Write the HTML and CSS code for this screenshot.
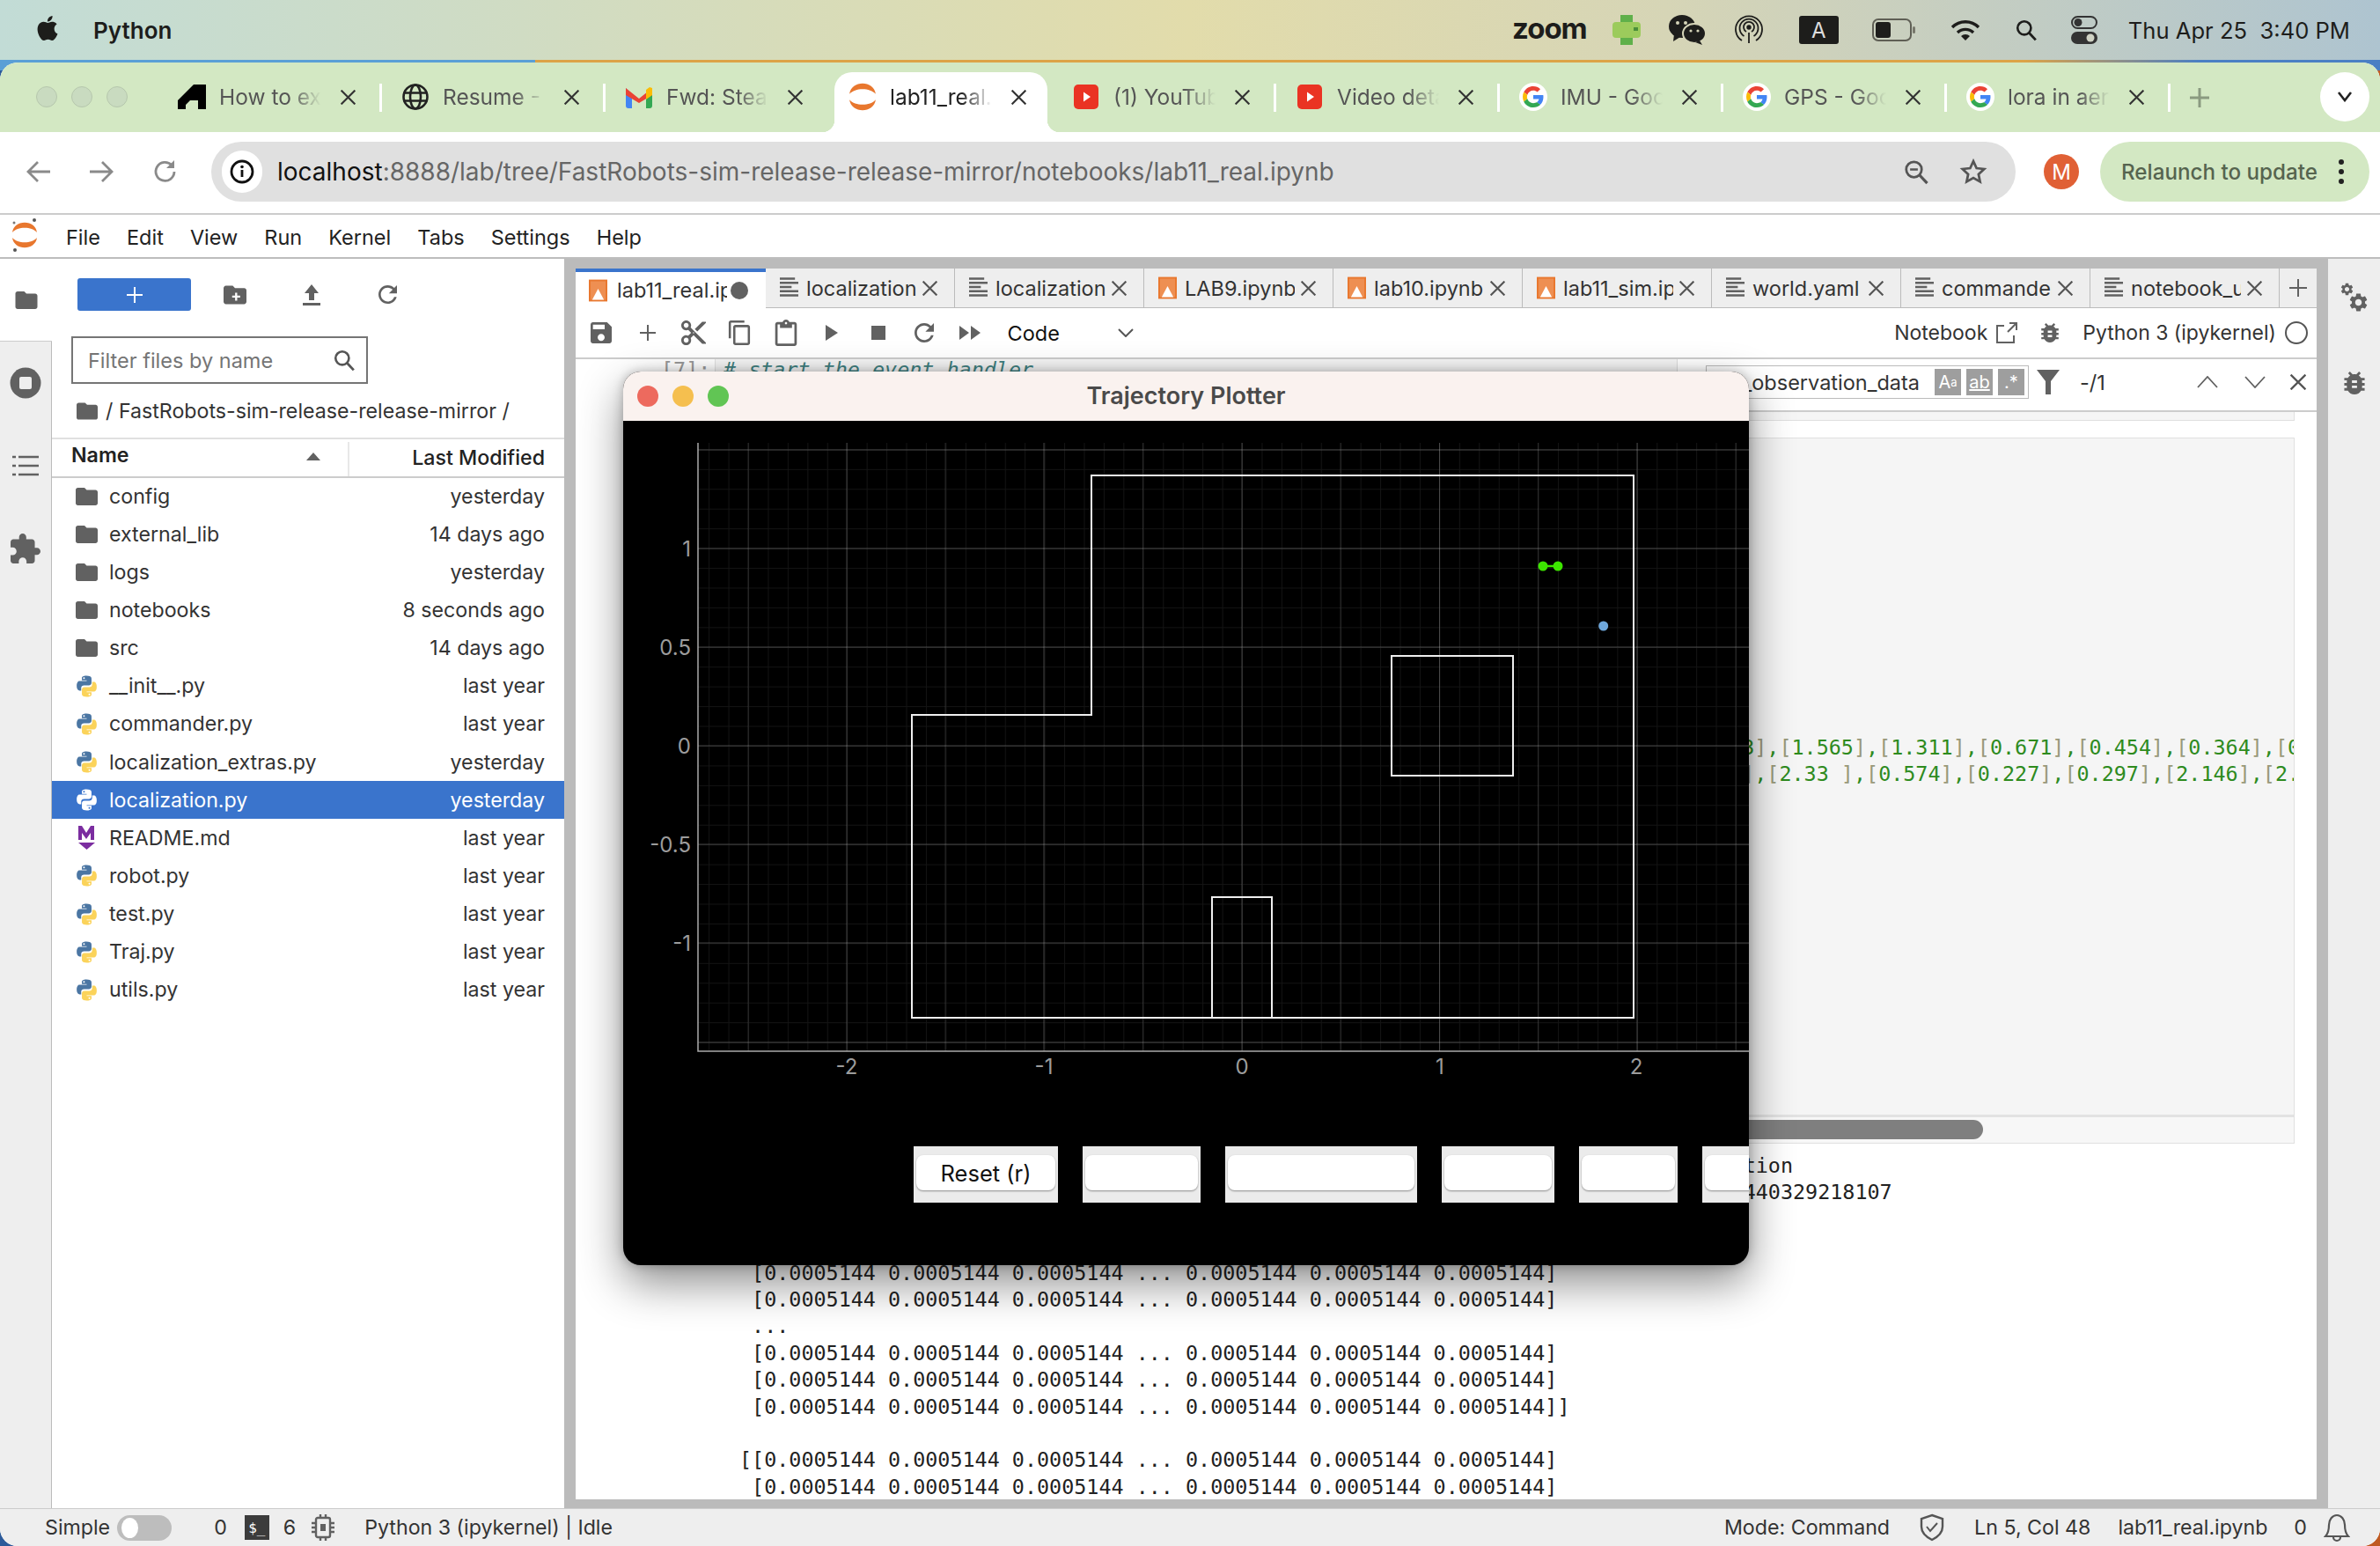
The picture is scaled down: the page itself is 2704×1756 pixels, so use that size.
FILE: index.html
```html
<!DOCTYPE html>
<html lang="en">
<head>
<meta charset="utf-8">
<title>lab11_real</title>
<link rel="stylesheet" href="styles.css">
</head>
<body>
<svg class="defs" width="0" height="0">
  <symbol id="i-folder" viewBox="2 4 20 16"><path d="M10 4H4c-1.1 0-2 .9-2 2v12c0 1.1.9 2 2 2h16c1.1 0 2-.9 2-2V8c0-1.1-.9-2-2-2h-8l-2-2z"/></symbol>
  <symbol id="i-py" viewBox="1.5 1 21 22">
    <path class="py-a" d="M11.9 1.5c-5 0-4.7 2.2-4.7 2.2v2.3h4.8v.7H5.3S2 6.3 2 11.4s2.8 4.9 2.8 4.9h1.7v-2.4s-.1-2.8 2.8-2.8h4.8s2.7 0 2.7-2.6V4.3s.4-2.8-4.9-2.8zM9.3 3a.9.9 0 1 1 0 1.8.9.9 0 0 1 0-1.8z"/>
    <path class="py-b" transform="rotate(180 12 12)" d="M11.9 1.5c-5 0-4.7 2.2-4.7 2.2v2.3h4.8v.7H5.3S2 6.3 2 11.4s2.8 4.9 2.8 4.9h1.7v-2.4s-.1-2.8 2.8-2.8h4.8s2.7 0 2.7-2.6V4.3s.4-2.8-4.9-2.8zM9.3 3a.9.9 0 1 1 0 1.8.9.9 0 0 1 0-1.8z"/>
  </symbol>
  <symbol id="i-x" viewBox="5 5 14 14"><path d="M5.500 5.500l13 13M18.500 5.500l-13 13" fill="none" stroke="currentColor" stroke-width="1.800"/></symbol>
  <symbol id="i-nb" viewBox="0 0 22 26"><rect width="22" height="26" fill="#e8772e"/><rect x="2" y="2" width="18" height="22" fill="#ee8f52"/><path d="M4 24L11 11l7 13z" fill="#fff"/></symbol>
  <symbol id="i-doc" viewBox="0 0 22 26"><path d="M0 2h18M0 7h22M0 12h14M0 17h22M0 22h22" fill="none" stroke="#616161" stroke-width="2.6"/></symbol>
  <symbol id="i-g" viewBox="-8 -8 64 64">
    <circle cx="24" cy="24" r="32" fill="#fff"/>
    <path fill="#EA4335" d="M24 9.5c3.54 0 6.71 1.22 9.21 3.6l6.85-6.85C35.9 2.38 30.47 0 24 0 14.62 0 6.51 5.38 2.56 13.22l7.98 6.19C12.43 13.72 17.74 9.5 24 9.5z"/>
    <path fill="#4285F4" d="M46.98 24.55c0-1.57-.15-3.09-.38-4.55H24v9.02h12.94c-.58 2.96-2.26 5.48-4.78 7.18l7.73 6c4.51-4.18 7.09-10.36 7.09-17.65z"/>
    <path fill="#FBBC05" d="M10.53 28.59c-.48-1.45-.76-2.99-.76-4.59s.27-3.14.76-4.59l-7.98-6.19C.92 16.46 0 20.12 0 24c0 3.88.92 7.54 2.56 10.78l7.97-6.19z"/>
    <path fill="#34A853" d="M24 48c6.48 0 11.93-2.13 16.06-5.81l-7.73-6c-2.15 1.45-4.92 2.3-8.33 2.3-6.26 0-11.57-4.22-13.47-9.91l-7.98 6.19C6.51 42.62 14.62 48 24 48z"/>
  </symbol>
  <symbol id="i-yt" viewBox="0 0 28 28"><rect width="28" height="28" rx="5" fill="#ea3323"/><path d="M11 8.5l8 5.5-8 5.5z" fill="#fff"/></symbol>
  <symbol id="i-jup" viewBox="0 0 30 30">
    <path d="M1 12C3 -3 27 -3 29 12 23 5 7 5 1 12z" fill="#e8772e"/>
    <path d="M1 18C3 33 27 33 29 18 23 25 7 25 1 18z" fill="#e8772e"/>
  </symbol>
  <symbol id="i-gear" viewBox="0 0 24 24"><path d="M19.14 12.94c.04-.3.06-.61.06-.94 0-.32-.02-.64-.07-.94l2.03-1.58c.18-.14.23-.41.12-.61l-1.92-3.32c-.12-.22-.37-.29-.59-.22l-2.39.96c-.5-.38-1.03-.7-1.62-.94l-.36-2.54c-.04-.24-.24-.41-.48-.41h-3.84c-.24 0-.43.17-.47.41l-.36 2.54c-.59.24-1.13.57-1.62.94l-2.39-.96c-.22-.08-.47 0-.59.22L2.74 8.87c-.12.21-.08.47.12.61l2.03 1.58c-.05.3-.07.62-.07.94s.02.64.07.94l-2.03 1.58c-.18.14-.23.41-.12.61l1.92 3.32c.12.22.37.29.59.22l2.39-.96c.5.38 1.03.7 1.62.94l.36 2.54c.05.24.24.41.48.41h3.84c.24 0 .44-.17.47-.41l.36-2.54c.59-.24 1.13-.56 1.62-.94l2.39.96c.22.08.47 0 .59-.22l1.92-3.32c.12-.22.07-.47-.12-.61l-2.01-1.58zM12 15.6c-1.98 0-3.6-1.62-3.6-3.6s1.62-3.6 3.6-3.6 3.6 1.62 3.6 3.6-1.62 3.6-3.6 3.6z"/></symbol>
  <symbol id="i-bug" viewBox="3 3 18 18"><path d="M20 8h-2.81c-.45-.78-1.07-1.45-1.82-1.96L17 4.41 15.59 3l-2.17 2.17C12.96 5.06 12.49 5 12 5c-.49 0-.96.06-1.41.17L8.41 3 7 4.41l1.62 1.63C7.88 6.55 7.26 7.22 6.81 8H4v2h2.09c-.05.33-.09.66-.09 1v1H4v2h2v1c0 .34.04.67.09 1H4v2h2.81c1.04 1.79 2.97 3 5.19 3s4.15-1.21 5.19-3H20v-2h-2.09c.05-.33.09-.66.09-1v-1h2v-2h-2v-1c0-.34-.04-.67-.09-1H20V8zm-6 8h-4v-2h4v2zm0-4h-4v-2h4v2z"/></symbol>
  <symbol id="i-search" viewBox="0 0 24 24"><circle cx="10" cy="10" r="7" fill="none" stroke="currentColor" stroke-width="2.4"/><path d="M15 15l7 7.5" stroke="currentColor" stroke-width="2.6" fill="none"/></symbol>
</svg>

<header class="menubar">
  <svg class="m-apple" width="28" height="32" viewBox="0 0 24 24"><path d="M12.152 6.896c-.948 0-2.415-1.078-3.96-1.04-2.04.027-3.91 1.183-4.961 3.014-2.117 3.675-.546 9.103 1.519 12.09 1.013 1.454 2.208 3.09 3.792 3.039 1.52-.065 2.09-.987 3.935-.987 1.831 0 2.35.987 3.96.948 1.637-.026 2.676-1.48 3.676-2.948 1.156-1.688 1.636-3.325 1.662-3.415-.039-.013-3.182-1.221-3.22-4.857-.026-3.04 2.48-4.494 2.597-4.559-1.429-2.09-3.623-2.324-4.39-2.376-2-.156-3.675 1.09-4.61 1.09zM15.53 3.83c.843-1.012 1.4-2.427 1.245-3.83-1.207.052-2.662.805-3.532 1.818-.78.896-1.454 2.338-1.273 3.714 1.338.104 2.715-.688 3.559-1.701"/></svg>
  <span class="m-app">Python</span>
  <span class="m-zoom">zoom</span>
  <svg class="m-i m-watch" width="32" height="34" viewBox="0 0 32 34"><rect x="9" y="0" width="14" height="34" fill="#5fb04a"/><rect x="0" y="8" width="32" height="18" rx="4" fill="#9ccb5c"/><rect x="24" y="14" width="5" height="4" fill="#4b8e3a"/></svg>
  <svg class="m-i m-wechat" width="42" height="34" viewBox="0 0 42 34"><ellipse cx="15" cy="13" rx="15" ry="13" fill="#1d1d1b"/><path d="M6 22l-1 8 8-5z" fill="#1d1d1b"/><ellipse cx="29" cy="21" rx="13" ry="11" fill="#1d1d1b" stroke="#d5d4b8" stroke-width="2"/><path d="M35 29l3 5-8-3z" fill="#1d1d1b"/><circle cx="10" cy="9" r="2" fill="#d5d4b8"/><circle cx="19" cy="9" r="2" fill="#d5d4b8"/><circle cx="25" cy="18" r="1.6" fill="#d5d4b8"/><circle cx="33" cy="18" r="1.6" fill="#d5d4b8"/></svg>
  <svg class="m-i m-air" width="32" height="34" viewBox="0 0 32 34" fill="none" stroke="#1d1d1b" stroke-width="1.8"><path d="M8 29a15 15 0 1 1 16 0"/><path d="M10.5 24a10.5 10.5 0 1 1 11 0"/><path d="M13 19a6 6 0 1 1 6 0"/><circle cx="16" cy="14" r="1.8" fill="#1d1d1b"/><path d="M16 20v12"/></svg>
  <span class="m-a">A</span>
  <svg class="m-i m-batt" width="50" height="26" viewBox="0 0 50 26"><rect x="1" y="1" width="43" height="24" rx="6" fill="none" stroke="#5f5f55" stroke-width="2"/><rect x="4" y="4" width="17" height="18" rx="3" fill="#1d1d1b"/><rect x="46" y="9" width="3" height="8" rx="1.5" fill="#77776b"/></svg>
  <svg class="m-i m-wifi" width="34" height="26" viewBox="0 0 34 26" fill="none" stroke="#1d1d1b" stroke-width="3.4"><path d="M2 10a21 21 0 0 1 30 0"/><path d="M8 16a13 13 0 0 1 18 0"/><path d="M17 25l-5-5a7 7 0 0 1 10 0z" fill="#1d1d1b" stroke="none"/></svg>
  <svg class="m-i m-srch" width="26" height="28" viewBox="0 0 24 24" color="#1d1d1b"><use href="#i-search"/></svg>
  <svg class="m-i m-ctl" width="30" height="32" viewBox="0 0 30 32"><rect x="1" y="1" width="28" height="13" rx="6.5" fill="none" stroke="#333" stroke-width="2"/><circle cx="8" cy="7.5" r="4.5" fill="#333"/><rect y="18" width="30" height="14" rx="7" fill="#333"/><circle cx="22" cy="25" r="4.5" fill="#cfd2c4"/></svg>
  <span class="m-clock">Thu Apr 25&nbsp;&nbsp;3:40 PM</span>
</header>

<div class="browser">
  <div class="tabstrip">
    <div class="lights"><i></i><i></i><i></i></div>
    <div class="ctab sep"><svg class="fav" width="32" height="28" viewBox="0 0 32 28"><path d="M0 28V18L18 0h14v28h-9V18h-9l-5 5v5z"/></svg><span class="ctab-t">How to extract</span><svg class="ctab-x" width="17" height="17"><use href="#i-x"/></svg></div>
    <div class="ctab sep"><svg class="fav" width="30" height="30" viewBox="0 0 30 30" fill="none" stroke="#222" stroke-width="2.6"><circle cx="15" cy="15" r="13.5"/><ellipse cx="15" cy="15" rx="6" ry="13.5"/><path d="M1.500 10.500h27M1.500 19.500h27"/></svg><span class="ctab-t">Resume - Ov</span><svg class="ctab-x" width="17" height="17"><use href="#i-x"/></svg></div>
    <div class="ctab"><svg class="fav" width="30" height="26" viewBox="0 0 30 26"><path d="M0 3v20a3 3 0 0 0 3 3h4V11z" fill="#4285f4"/><path d="M30 3v20a3 3 0 0 1-3 3h-4V11z" fill="#34a853"/><path d="M0 3l15 12L30 3v8L15 20 0 11z" fill="#ea4335"/><path d="M23 5l4-3 3 1v8l-7 5z" fill="#fbbc04"/></svg><span class="ctab-t">Fwd: Stead</span><svg class="ctab-x" width="17" height="17"><use href="#i-x"/></svg></div>
    <div class="ctab active"><svg class="fav" width="32" height="32"><use href="#i-jup"/></svg><span class="ctab-t">lab11_real.ipynb</span><svg class="ctab-x" width="17" height="17"><use href="#i-x"/></svg></div>
    <div class="ctab sep"><svg class="fav" width="28" height="28"><use href="#i-yt"/></svg><span class="ctab-t">(1) YouTube</span><svg class="ctab-x" width="17" height="17"><use href="#i-x"/></svg></div>
    <div class="ctab sep"><svg class="fav" width="28" height="28"><use href="#i-yt"/></svg><span class="ctab-t">Video details</span><svg class="ctab-x" width="17" height="17"><use href="#i-x"/></svg></div>
    <div class="ctab sep"><svg class="fav" width="32" height="32"><use href="#i-g"/></svg><span class="ctab-t">IMU - Google</span><svg class="ctab-x" width="17" height="17"><use href="#i-x"/></svg></div>
    <div class="ctab sep"><svg class="fav" width="32" height="32"><use href="#i-g"/></svg><span class="ctab-t">GPS - Google</span><svg class="ctab-x" width="17" height="17"><use href="#i-x"/></svg></div>
    <div class="ctab sep"><svg class="fav" width="32" height="32"><use href="#i-g"/></svg><span class="ctab-t">lora in aerial</span><svg class="ctab-x" width="17" height="17"><use href="#i-x"/></svg></div>
    <svg class="ctab-plus" width="22" height="22" viewBox="0 0 22 22"><path d="M11 0v22M0 11h22" stroke="#8a9a80" stroke-width="3"/></svg>
    <div class="tabmenu"><svg width="18" height="12" viewBox="0 0 18 12"><path d="M2 1l7 9 7-9" fill="none" stroke="#222" stroke-width="2.6"/></svg></div>
  </div>

  <div class="addr">
    <svg class="nav nav1" width="28" height="26" viewBox="0 0 28 26"><path d="M27 13H3M13 2L2 13l11 11" fill="none" stroke="#8a8a8a" stroke-width="2.8"/></svg>
    <svg class="nav nav2" width="28" height="26" viewBox="0 0 28 26"><path d="M1 13h24M15 2l11 11-11 11" fill="none" stroke="#8a8a8a" stroke-width="2.8"/></svg>
    <svg class="nav nav3" width="28" height="28" viewBox="0 0 28 28"><path d="M24 14a10.500 10.500 0 1 1-3-7.500" fill="none" stroke="#8a8a8a" stroke-width="2.8"/><path d="M24 1v9h-9z" fill="#8a8a8a"/></svg>
    <div class="omni">
      <span class="omni-i"><svg width="28" height="28" viewBox="0 0 28 28"><circle cx="14" cy="14" r="12" fill="none" stroke="#111" stroke-width="2.800"/><path d="M14 12v8" stroke="#111" stroke-width="2.800"/><circle cx="14" cy="8.500" r="1.800" fill="#111"/></svg></span>
      <span class="omni-t"><b>localhost</b>:8888/lab/tree/FastRobots-sim-release-release-mirror/notebooks/lab11_real.ipynb</span>
      <svg class="omni-z" width="30" height="30" viewBox="0 0 24 24" color="#555"><circle cx="10" cy="10" r="7" fill="none" stroke="currentColor" stroke-width="2.200"/><path d="M15 15l7 7.500" stroke="currentColor" stroke-width="2.600"/><path d="M6.500 10h7" stroke="currentColor" stroke-width="2"/></svg>
      <svg class="omni-s" width="32" height="30" viewBox="0 0 24 24"><path d="M12 2.500l2.900 6.300 6.900.8-5.100 4.700 1.400 6.800-6.100-3.400-6.100 3.400 1.400-6.800L2.200 9.600l6.900-.8z" fill="none" stroke="#555" stroke-width="2.200"/></svg>
    </div>
    <span class="avatar">M</span>
    <div class="relaunch"><span>Relaunch to update</span><svg width="8" height="30" viewBox="0 0 8 30"><circle cx="4" cy="4" r="3" fill="#222"/><circle cx="4" cy="15" r="3" fill="#222"/><circle cx="4" cy="26" r="3" fill="#222"/></svg></div>
  </div>

  <div class="jlab">
    <div class="jmenu">
      <svg class="j-logo" width="30" height="38" viewBox="0 0 30 38"><use href="#i-jup" x="0" y="4" width="30" height="30"/><circle cx="26" cy="2" r="2" fill="#555"/><circle cx="3" cy="5" r="1.500" fill="#777"/><circle cx="4" cy="36" r="2" fill="#555"/></svg>
      <span>File</span><span>Edit</span><span>View</span><span>Run</span><span>Kernel</span><span>Tabs</span><span>Settings</span><span>Help</span>
    </div>
    <div class="jbody">
      <nav class="rail">
        <div class="rail-on"><svg width="30" height="30" viewBox="0 0 24 24" fill="#616161"><path d="M10 4H4c-1.100 0-2 .9-2 2v12c0 1.100.9 2 2 2h16c1.100 0 2-.9 2-2V8c0-1.100-.9-2-2-2h-8l-2-2z"/></svg></div>
        <div class="rail-b"><svg width="36" height="36" viewBox="0 0 36 36"><circle cx="18" cy="18" r="17.500" fill="#616161"/><rect x="11" y="11" width="14" height="14" rx="2" fill="#eee"/></svg></div>
        <div class="rail-b"><svg width="30" height="24" viewBox="0 0 30 24" fill="none" stroke="#616161" stroke-width="2.600"><path d="M7 2h23M7 12h23M7 22h23M0 2h4M0 12h4M0 22h4"/></svg></div>
        <div class="rail-b"><svg width="34" height="34" viewBox="2 1 21 21" fill="#616161"><path d="M20.500 11H19V7c0-1.100-.9-2-2-2h-4V3.500C13 2.120 11.880 1 10.500 1S8 2.120 8 3.500V5H4c-1.100 0-1.990.9-1.990 2v3.800H3.500c1.490 0 2.700 1.210 2.700 2.700s-1.210 2.700-2.700 2.700H2V20c0 1.100.9 2 2 2h3.800v-1.500c0-1.490 1.210-2.700 2.700-2.700 1.490 0 2.700 1.210 2.700 2.700V22H17c1.100 0 2-.9 2-2v-4h1.500c1.380 0 2.500-1.120 2.500-2.500S21.880 11 20.500 11z"/></svg></div>
      </nav>

      <aside class="files">
        <div class="f-tools">
          <button class="f-new"><svg width="18" height="18" viewBox="0 0 18 18"><path d="M9 0v18M0 9h18" stroke="#fff" stroke-width="2"/></svg></button>
          <svg class="f-t1" width="26" height="24" viewBox="2 4 20 16" fill="#616161"><path d="M10 4H4c-1.100 0-2 .9-2 2v12c0 1.100.9 2 2 2h16c1.100 0 2-.9 2-2V8c0-1.100-.9-2-2-2h-8l-2-2z"/><path d="M13 10v7M9.500 13.500h7" stroke="#fff" stroke-width="1.800"/></svg>
          <svg class="f-t2" width="20" height="24" viewBox="0 0 20 24" fill="#616161"><path d="M10 0l8 10h-5v8H7v-8H2zM0 21h20v3H0z"/></svg>
          <svg class="f-t3" width="21" height="21" viewBox="4 4 16 16" fill="#616161"><path d="M17.650 6.350C16.200 4.900 14.210 4 12 4c-4.420 0-7.990 3.580-7.990 8s3.570 8 7.990 8c3.730 0 6.840-2.550 7.730-6h-2.080c-.82 2.330-3.040 4-5.650 4-3.310 0-6-2.690-6-6s2.690-6 6-6c1.660 0 3.140.69 4.220 1.780L13 11h7V4l-2.350 2.350z"/></svg>
        </div>
        <div class="f-filter"><span>Filter files by name</span><svg width="26" height="26" viewBox="0 0 24 24" color="#555"><use href="#i-search"/></svg></div>
        <div class="f-crumb"><svg width="24" height="20" fill="#616161"><use href="#i-folder"/></svg><span>/ FastRobots-sim-release-release-mirror /</span></div>
        <div class="f-head"><span class="f-name">Name</span><svg class="f-sort" width="16" height="9" viewBox="0 0 16 9"><path d="M8 0l8 9H0z" fill="#616161"/></svg><span class="f-mod">Last Modified</span></div>
        <div class="f-list">
          <div class="f-row"><svg class="f-ic" width="25" height="20" fill="#616161"><use href="#i-folder"/></svg><span class="f-n">config</span><span class="f-d">yesterday</span></div>
          <div class="f-row"><svg class="f-ic" width="25" height="20" fill="#616161"><use href="#i-folder"/></svg><span class="f-n">external_lib</span><span class="f-d">14 days ago</span></div>
          <div class="f-row"><svg class="f-ic" width="25" height="20" fill="#616161"><use href="#i-folder"/></svg><span class="f-n">logs</span><span class="f-d">yesterday</span></div>
          <div class="f-row"><svg class="f-ic" width="25" height="20" fill="#616161"><use href="#i-folder"/></svg><span class="f-n">notebooks</span><span class="f-d">8 seconds ago</span></div>
          <div class="f-row"><svg class="f-ic" width="25" height="20" fill="#616161"><use href="#i-folder"/></svg><span class="f-n">src</span><span class="f-d">14 days ago</span></div>
          <div class="f-row"><svg class="f-ic" width="25" height="25"><use href="#i-py"/></svg><span class="f-n">__init__.py</span><span class="f-d">last year</span></div>
          <div class="f-row"><svg class="f-ic" width="25" height="25"><use href="#i-py"/></svg><span class="f-n">commander.py</span><span class="f-d">last year</span></div>
          <div class="f-row"><svg class="f-ic" width="25" height="25"><use href="#i-py"/></svg><span class="f-n">localization_extras.py</span><span class="f-d">yesterday</span></div>
          <div class="f-row sel"><svg class="f-ic" width="25" height="25"><use href="#i-py"/></svg><span class="f-n">localization.py</span><span class="f-d">yesterday</span></div>
          <div class="f-row"><svg class="f-ic" width="25" height="27" viewBox="0 0 25 27"><path d="M3 16V0h4l5 8 5-8h4v16h-4V8l-5 7-5-7v8z" fill="#7b2da0"/><path d="M3 19h19l-9.500 8z" fill="#7b2da0"/></svg><span class="f-n">README.md</span><span class="f-d">last year</span></div>
          <div class="f-row"><svg class="f-ic" width="25" height="25"><use href="#i-py"/></svg><span class="f-n">robot.py</span><span class="f-d">last year</span></div>
          <div class="f-row"><svg class="f-ic" width="25" height="25"><use href="#i-py"/></svg><span class="f-n">test.py</span><span class="f-d">last year</span></div>
          <div class="f-row"><svg class="f-ic" width="25" height="25"><use href="#i-py"/></svg><span class="f-n">Traj.py</span><span class="f-d">last year</span></div>
          <div class="f-row"><svg class="f-ic" width="25" height="25"><use href="#i-py"/></svg><span class="f-n">utils.py</span><span class="f-d">last year</span></div>
        </div>
      </aside>

      <main class="main">
        <div class="d-tabs">
          <div class="d-tab on"><svg width="21" height="26"><use href="#i-nb"/></svg><span class="d-t">lab11_real.ipynb</span><span class="d-dot"></span></div>
          <div class="d-tab"><svg width="21" height="26"><use href="#i-doc"/></svg><span class="d-t">localization_extras.py</span><svg class="d-x" width="17" height="17"><use href="#i-x"/></svg></div>
          <div class="d-tab"><svg width="21" height="26"><use href="#i-doc"/></svg><span class="d-t">localization.py</span><svg class="d-x" width="17" height="17"><use href="#i-x"/></svg></div>
          <div class="d-tab"><svg width="21" height="26"><use href="#i-nb"/></svg><span class="d-t">LAB9.ipynb</span><svg class="d-x" width="17" height="17"><use href="#i-x"/></svg></div>
          <div class="d-tab"><svg width="21" height="26"><use href="#i-nb"/></svg><span class="d-t">lab10.ipynb</span><svg class="d-x" width="17" height="17"><use href="#i-x"/></svg></div>
          <div class="d-tab"><svg width="21" height="26"><use href="#i-nb"/></svg><span class="d-t">lab11_sim.ipynb</span><svg class="d-x" width="17" height="17"><use href="#i-x"/></svg></div>
          <div class="d-tab"><svg width="21" height="26"><use href="#i-doc"/></svg><span class="d-t">world.yaml</span><svg class="d-x" width="17" height="17"><use href="#i-x"/></svg></div>
          <div class="d-tab"><svg width="21" height="26"><use href="#i-doc"/></svg><span class="d-t">commander.py</span><svg class="d-x" width="17" height="17"><use href="#i-x"/></svg></div>
          <div class="d-tab"><svg width="21" height="26"><use href="#i-doc"/></svg><span class="d-t">notebook_utils.py</span><svg class="d-x" width="17" height="17"><use href="#i-x"/></svg></div>
          <svg class="d-plus" width="20" height="20" viewBox="0 0 20 20"><path d="M10 0v20M0 10h20" stroke="#616161" stroke-width="2"/></svg>
        </div>

        <div class="nb-tools">
          <span class="t-b"><svg width="24" height="24" viewBox="3 3 18 18" fill="#616161"><path d="M17 3H5c-1.110 0-2 .9-2 2v14c0 1.100.89 2 2 2h14c1.100 0 2-.9 2-2V7l-4-4zm-5 16c-1.660 0-3-1.340-3-3s1.340-3 3-3 3 1.340 3 3-1.340 3-3 3zm3-10H5V5h10v4z"/></svg></span>
          <span class="t-b"><svg width="18" height="18" viewBox="0 0 18 18"><path d="M9 0v18M0 9h18" stroke="#616161" stroke-width="2"/></svg></span>
          <span class="t-b"><svg width="28" height="28" viewBox="2 2 20 20" fill="#616161"><path d="M9.640 7.640c.23-.5.36-1.050.36-1.640 0-2.210-1.790-4-4-4S2 3.790 2 6s1.790 4 4 4c.59 0 1.140-.13 1.640-.36L10 12l-2.360 2.360C7.140 14.130 6.590 14 6 14c-2.210 0-4 1.790-4 4s1.790 4 4 4 4-1.790 4-4c0-.59-.13-1.140-.36-1.640L12 14l7 7h3v-1L9.640 7.640zM6 8c-1.100 0-2-.89-2-2s.9-2 2-2 2 .89 2 2-.9 2-2 2zm0 12c-1.100 0-2-.89-2-2s.9-2 2-2 2 .89 2 2-.9 2-2 2zm6-7.500c-.28 0-.5-.22-.5-.5s.22-.5.5-.5.5.22.5.5-.22.5-.5.5zM19 3l-6 6 2 2 7-7V3z"/></svg></span>
          <span class="t-b"><svg width="26" height="28" viewBox="2 1 19 22" fill="#616161"><path d="M16 1H4c-1.100 0-2 .9-2 2v14h2V3h12V1zm3 4H8c-1.100 0-2 .9-2 2v14c0 1.100.9 2 2 2h11c1.100 0 2-.9 2-2V7c0-1.100-.9-2-2-2zm0 16H8V7h11v14z"/></svg></span>
          <span class="t-b"><svg width="26" height="30" viewBox="3 0 18 22" fill="#616161"><path d="M19 2h-4.180C14.400.84 13.300 0 12 0c-1.300 0-2.400.84-2.820 2H5c-1.100 0-2 .9-2 2v16c0 1.100.9 2 2 2h14c1.100 0 2-.9 2-2V4c0-1.100-.9-2-2-2zm-7 0c.55 0 1 .45 1 1s-.45 1-1 1-1-.45-1-1 .45-1 1-1zm7 18H5V4h2v3h10V4h2v16z"/></svg></span>
          <span class="t-b"><svg width="14" height="18" viewBox="0 0 14 18"><path d="M0 0l14 9-14 9z" fill="#616161"/></svg></span>
          <span class="t-b"><svg width="16" height="16"><rect width="16" height="16" fill="#616161"/></svg></span>
          <span class="t-b"><svg width="22" height="24" viewBox="4 4 16 16" fill="#616161"><path d="M17.650 6.350C16.200 4.900 14.210 4 12 4c-4.420 0-7.990 3.580-7.990 8s3.570 8 7.990 8c3.730 0 6.840-2.550 7.730-6h-2.080c-.82 2.330-3.040 4-5.650 4-3.310 0-6-2.690-6-6s2.690-6 6-6c1.660 0 3.140.69 4.220 1.780L13 11h7V4l-2.350 2.350z"/></svg></span>
          <span class="t-b"><svg width="24" height="16" viewBox="0 0 24 16" fill="#616161"><path d="M0 0l11 8L0 16zM13 0l11 8-11 8z"/></svg></span>
          <span class="t-code">Code</span>
          <svg class="t-chev" width="18" height="10" viewBox="0 0 18 10"><path d="M1 1l8 8 8-8" fill="none" stroke="#555" stroke-width="2"/></svg>
          <span class="t-nb">Notebook</span>
          <svg class="t-ext" width="24" height="24" viewBox="0 0 24 24" fill="none" stroke="#616161" stroke-width="2"><path d="M9 4H1v19h19v-8M13 11L23 1M15 1h8v8"/></svg>
          <svg class="t-bug" width="22" height="26" fill="#616161"><use href="#i-bug"/></svg>
          <span class="t-kern">Python 3 (ipykernel)</span>
          <svg class="t-circ" width="26" height="26" viewBox="0 0 26 26"><circle cx="13" cy="13" r="12" fill="none" stroke="#555" stroke-width="2"/></svg>
        </div>

        <div class="nb-body">
          <div class="cell-top"><span class="prompt">[7]:</span><pre class="cell-c1"># start the event handler</pre></div>
          <div class="cell-out">
            <pre class="code-lines"><span class="br">[</span>1.000<span class="br">]</span>,<span class="br">[</span>0.883<span class="br">]</span>,<span class="br">[</span>1.565<span class="br">]</span>,<span class="br">[</span>1.311<span class="br">]</span>,<span class="br">[</span>0.671<span class="br">]</span>,<span class="br">[</span>0.454<span class="br">]</span>,<span class="br">[</span>0.364<span class="br">]</span>,<span class="br">[</span>0.512<span class="br">]</span>
<span class="br">[</span>1.00<span class="br">]</span>,<span class="br">[</span>0.990<span class="br">]</span>,<span class="br">[</span>2.33 <span class="br">]</span>,<span class="br">[</span>0.574<span class="br">]</span>,<span class="br">[</span>0.227<span class="br">]</span>,<span class="br">[</span>0.297<span class="br">]</span>,<span class="br">[</span>2.146<span class="br">]</span>,<span class="br">[</span>2.451<span class="br">]</span></pre>
            <div class="hscroll"><span class="thumb"></span></div>
          </div>
          <pre class="output">                                                                         localization
                                                                         Time: 0.440329218107

[[0.0005144 0.0005144 0.0005144 ... 0.0005144 0.0005144 0.0005144]
 [0.0005144 0.0005144 0.0005144 ... 0.0005144 0.0005144 0.0005144]
 [0.0005144 0.0005144 0.0005144 ... 0.0005144 0.0005144 0.0005144]
 ...
 [0.0005144 0.0005144 0.0005144 ... 0.0005144 0.0005144 0.0005144]
 [0.0005144 0.0005144 0.0005144 ... 0.0005144 0.0005144 0.0005144]
 [0.0005144 0.0005144 0.0005144 ... 0.0005144 0.0005144 0.0005144]]

[[0.0005144 0.0005144 0.0005144 ... 0.0005144 0.0005144 0.0005144]
 [0.0005144 0.0005144 0.0005144 ... 0.0005144 0.0005144 0.0005144]</pre>
          <div class="findbar">
            <div class="find-box"><span class="find-t">get_observation_data</span><span class="fb">A<sup>a</sup></span><span class="fb fb-u">ab</span><span class="fb">.*</span></div>
            <svg class="find-f" width="26" height="28" viewBox="0 0 26 28"><path d="M0 0h26L16 13v15h-6V13z" fill="#616161"/></svg>
            <span class="find-c">-/1</span>
            <svg class="find-up" width="24" height="14" viewBox="0 0 24 14"><path d="M1 13L12 1l11 12" fill="none" stroke="#616161" stroke-width="1.800"/></svg>
            <svg class="find-dn" width="24" height="14" viewBox="0 0 24 14"><path d="M1 1l11 12L23 1" fill="none" stroke="#616161" stroke-width="1.800"/></svg>
            <svg class="find-x" width="18" height="18" color="#555"><use href="#i-x"/></svg>
          </div>
        </div>
      </main>

      <nav class="rail-r">
        <svg class="r-gear" width="34" height="36" viewBox="0 0 34 36" fill="#616161"><use href="#i-gear" x="0" y="0" width="17" height="17"/><use href="#i-gear" x="9" y="11" width="25" height="25"/></svg>
        <svg class="r-bug" width="26" height="30" fill="#616161"><use href="#i-bug"/></svg>
      </nav>
    </div>

    <footer class="status">
      <span class="s-simple">Simple</span>
      <span class="s-toggle"><i></i></span>
      <span class="s-0">0</span>
      <span class="s-term">$_</span>
      <span class="s-6">6</span>
      <svg class="s-cpu" width="26" height="30" viewBox="0 0 26 30" fill="none" stroke="#616161" stroke-width="2.400"><rect x="5" y="4" width="16" height="22" rx="2"/><rect x="10" y="11" width="6" height="8" fill="#616161" stroke="none"/><path d="M0 10h5M0 15h5M0 20h5M21 10h5M21 15h5M21 20h5M10 0v4M16 0v4M10 26v4M16 26v4"/></svg>
      <span class="s-kern">Python 3 (ipykernel) | Idle</span>
      <span class="s-mode">Mode: Command</span>
      <svg class="s-shield" width="28" height="32" viewBox="0 0 28 32" fill="none" stroke="#555" stroke-width="2.400"><path d="M14 2l12 4v9c0 8-6 12-12 15C8 27 2 23 2 15V6z"/><path d="M8 15l4 5 8-9" stroke-width="2"/></svg>
      <span class="s-ln">Ln 5, Col 48</span>
      <span class="s-file">lab11_real.ipynb</span>
      <span class="s-n">0</span>
      <svg class="s-bell" width="30" height="34" viewBox="0 0 30 34" fill="none" stroke="#555" stroke-width="2.200"><path d="M2 27c3-3 4-7 4-13 0-6 4-11 9-11s9 5 9 11c0 6 1 10 4 13z"/><path d="M11 28a4 4 0 0 0 8 0"/></svg>
    </footer>
  </div>
</div>

<section class="plotwin">
  <div class="pw-title"><i class="tl r"></i><i class="tl y"></i><i class="tl g"></i><span>Trajectory Plotter</span></div>
  <svg class="plot" width="1279" height="824" viewBox="708 478 1279 824">
    <defs>
      <pattern id="minor" x="1411" y="847" width="22.44" height="22.44" patternUnits="userSpaceOnUse">
        <path d="M.5 0V22.440M0 .5H22.440" stroke="#fff" stroke-opacity=".08" fill="none"/>
      </pattern>
    </defs>
    <rect x="793" y="503" width="1194" height="691" fill="url(#minor)"/>
    <path class="major-half" d="M850 503V1194M1074 503V1194M1298.500 503V1194M1523 503V1194M1747.500 503V1194M1972 503V1194"/>
    <path class="major" d="M962 503V1194M1186 503V1194M1411 503V1194M1635.500 503V1194M1860 503V1194M793 511H1987M793 623H1987M793 735H1987M793 847H1987M793 959H1987M793 1071H1987M793 1184H1987"/>
    <path class="axis" d="M793 503V1194H1987"/>
    <path class="wall" d="M1036 812H1240V540H1856V1156H1036Z"/>
    <path class="wall" d="M1581 745H1719V881H1581Z"/>
    <path class="wall" d="M1377 1156V1019H1445V1156"/>
    <path class="traj" d="M1753 643H1770"/>
    <circle class="dot-g" cx="1753" cy="643" r="5.500"/>
    <circle class="dot-g" cx="1770" cy="643" r="5.500"/>
    <circle class="dot-b" cx="1821.700" cy="711" r="5.500"/>
    <g class="ticks">
      <text x="962" y="1220">-2</text><text x="1186" y="1220">-1</text><text x="1411" y="1220">0</text><text x="1636" y="1220">1</text><text x="1859" y="1220">2</text>
    </g>
    <g class="ticks ticks-y">
      <text x="785" y="632">1</text><text x="785" y="744">0.5</text><text x="785" y="856">0</text><text x="785" y="968">-0.5</text><text x="785" y="1080">-1</text>
    </g>
  </svg>
  <div class="pw-btns">
    <div class="slot s1"><button>Reset (r)</button></div>
    <div class="slot s2"><button></button></div>
    <div class="slot s3"><button></button></div>
    <div class="slot s4"><button></button></div>
    <div class="slot s5"><button></button></div>
    <div class="slot s6"><button></button></div>
  </div>
</section>
</body>
</html>
```
FILE: styles.css
```css
* { box-sizing: border-box; }
html, body { margin: 0; height: 100%; }
body {
  width: 2704px; height: 1756px; overflow: hidden; position: relative;
  font-family: Inter, "Noto Sans", sans-serif; font-size: 24px; color: #222;
  background:
    linear-gradient(90deg, #5a9fd6 0 608px, #dca347 608px 2300px, #4a7fc4 2500px) 0 0 / 100% 80px no-repeat,
    linear-gradient(90deg, #2c5a9a 0 50%, #bf5a22 50%);
}
.defs { position: absolute; }
svg { display: block; flex: none; }
.py-a { fill: var(--py-a, #4b76a3); }
.py-b { fill: var(--py-b, #fbd35a); }

/* macOS menu bar */
.menubar {
  height: 68px; display: flex; align-items: center; color: #1d1d1b;
  background: linear-gradient(90deg, #c2dcd6 0, #e2dcab 50%, #d6d5b6 70%, #aec4d0 100%);
}
.m-apple { margin-left: 40px; margin-top: -4px; fill: #1d1d1b; }
.m-app { margin-left: 38px; font-weight: 600; font-size: 26px; }
.m-zoom { margin-left: auto; font-weight: 700; font-size: 33px; letter-spacing: -1px; margin-top: -4px; }
.m-watch { margin-left: 29px; }
.m-wechat { margin-left: 32px; }
.m-air { margin-left: 33px; }
.m-a { margin-left: 41px; width: 45px; height: 32px; background: #1d1d1b; color: #ddd; border-radius: 3px; display: flex; align-items: center; justify-content: center; font-size: 24px; }
.m-batt { margin-left: 38px; }
.m-wifi { margin-left: 39px; }
.m-srch { margin-left: 39px; }
.m-ctl { margin-left: 38px; }
.m-clock { margin-left: 35px; margin-right: 34px; font-size: 25.600px; }

/* Browser window */
.browser {
  position: absolute; left: 0; right: 0; top: 71px; bottom: 0;
  border-radius: 20px; overflow: hidden; display: flex; flex-direction: column; background: #fff;
}
.tabstrip { height: 79px; background: #d3e8c3; display: flex; align-items: flex-end; position: relative; flex: none; }
.lights { width: 180px; height: 68px; display: flex; align-items: center; padding: 0 0 12px 41px; gap: 16px; }
.lights i { width: 24px; height: 24px; border-radius: 50%; background: #c9dbc0; border: 1px solid #b6c7ad; }
.ctab {
  width: 254px; height: 68px; display: flex; align-items: center; padding: 0 0 12px 22px; position: relative; color: #555; flex: none;
  font-size: 24.500px;
}
.ctab.sep::after { content: ""; position: absolute; right: 0; top: 13px; width: 3px; height: 32px; background: #fff; }
.fav { width: 32px; margin-right: 15px; }
.ctab-t { width: 116px; overflow: hidden; white-space: nowrap; -webkit-mask-image: linear-gradient(90deg, #000 70%, transparent 100%); mask-image: linear-gradient(90deg, #000 70%, transparent 100%); }
.ctab-x { margin-left: 22px; color: #333; }
.ctab.active { background: #fff; color: #222; border-radius: 20px 20px 0 0; margin: 0 6px; width: 242px; padding-left: 16px; height: 68px; }
.ctab.active::before, .ctab.active::after { content: ""; position: absolute; bottom: 0; width: 14px; height: 14px; }
.ctab.active::before { left: -14px; background: radial-gradient(circle at 0 0, transparent 14px, #fff 14.5px); }
.ctab.active::after { right: -14px; background: radial-gradient(circle at 100% 0, transparent 14px, #fff 14.5px); }
.ctab-plus { margin-left: 22px; align-self: center; }
.tabmenu { position: absolute; left: 2636px; top: 11px; width: 56px; height: 56px; border-radius: 50%; background: #fff; display: flex; align-items: center; justify-content: center; }

.addr { height: 94px; border-bottom: 2px solid #ccc; display: flex; align-items: center; flex: none; padding-bottom: 2px; background: #fff; }
.nav1 { margin-left: 30px; }
.nav2 { margin-left: 43px; }
.nav3 { margin-left: 45px; }
.omni { margin-left: 38px; width: 2050px; height: 68px; border-radius: 34px; background: #e0e0e0; display: flex; align-items: center; }
.omni-i { margin-left: 12px; width: 46px; height: 48px; border-radius: 24px; background: #fff; display: flex; align-items: center; justify-content: center; }
.omni-t { margin-left: 17px; font-size: 28px; color: #666; white-space: nowrap; }
.omni-t b { font-weight: 400; color: #111; }
.omni-z { margin-left: auto; }
.omni-s { margin-left: 34px; margin-right: 32px; }
.avatar { margin-left: 32px; width: 40px; height: 40px; border-radius: 50%; background: #e06035; color: #fff; display: flex; align-items: center; justify-content: center; font-size: 24px; }
.relaunch { margin-left: 24px; width: 306px; height: 68px; border-radius: 34px; background: #d3e8c3; display: flex; align-items: center; padding-left: 24px; color: #56644f; font-size: 24.200px; font-weight: 500; white-space: nowrap; }
.relaunch svg { margin-left: auto; margin-right: 28px; }

/* JupyterLab */
.jlab { flex: 1; display: flex; flex-direction: column; min-height: 0; }
.jmenu { height: 50px; border-bottom: 2px solid #bdbdbd; display: flex; align-items: center; flex: none; font-size: 23.500px; }
.j-logo { margin-left: 13px; margin-right: 32px; margin-top: -2px; }
.jmenu span { margin-right: 30px; margin-top: 2px; }
.jbody { flex: 1; display: flex; min-height: 0; }

.rail { width: 59px; flex: none; background: #eee; border-right: 1px solid #bbb; display: flex; flex-direction: column; }
.rail-on { height: 94px; background: #fff; margin-right: -1px; display: flex; align-items: center; justify-content: center; border-bottom: 1px solid #ccc; position: relative; }
.rail-b { height: 94px; display: flex; align-items: center; justify-content: center; }

.files { width: 582px; flex: none; background: #fff; display: flex; flex-direction: column; }
.f-tools { display: flex; align-items: center; margin-top: 22px; height: 37px; padding-left: 29px; }
.f-new { width: 129px; height: 37px; border: 0; border-radius: 3px; background: #3a74cc; display: flex; align-items: center; justify-content: center; padding: 0; }
.f-t1 { margin-left: 37px; }
.f-t2 { margin-left: 64px; }
.f-t3 { margin-left: 66px; }
.f-filter { margin: 29px 0 0 22px; width: 337px; height: 54px; border: 2px solid #757575; display: flex; align-items: center; padding: 0 12px 0 17px; color: #757575; font-size: 23.500px; }
.f-filter svg { margin-left: auto; }
.f-crumb { height: 61px; display: flex; align-items: center; padding-left: 28px; gap: 9px; font-size: 23.200px; color: #333; }
.f-head { height: 46px; border-top: 2px solid #e0e0e0; border-bottom: 2px solid #ccc; display: flex; align-items: center; position: relative; padding: 0 22px; font-size: 23.200px; }
.f-name { font-weight: 600; margin-top: -6px; }
.f-sort { position: absolute; left: 289px; top: 15px; }
.f-mod { margin-left: auto; font-weight: 500; }
.f-mod::before { content: ""; position: absolute; left: 336px; top: 3px; bottom: 0; width: 2px; background: #e8e8e8; }
.f-list { flex: 1; margin-top: -1px; }
.f-row { height: 43.150px; display: flex; align-items: center; padding: 0 22px 0 27px; font-size: 23.200px; color: #333; }
.f-ic { margin-right: 13px; }
.f-d { margin-left: auto; }
.f-row.sel { background: #3a74cc; color: #fff; --py-a: #fff; --py-b: #fff; }

.main { flex: none; background: #bbb; padding: 11px 13px 10px 13px; display: flex; flex-direction: column; min-height: 0; width: 2004px; }
.d-tabs { height: 45px; display: flex; flex: none; background: #eee; align-items: stretch; border-bottom: 1px solid #bbb; }
.d-tab { width: 215px; flex: none; background: #eee; border-right: 1px solid #bbb; display: flex; align-items: center; padding-left: 16px; font-size: 23.500px; color: #333; }
.d-tab.on { background: #fff; border-top: 4px solid #3a74cc; margin-bottom: -1px; position: relative; padding-left: 15px; width: 216px; border-right: 0; }
.d-t { margin-left: 9px; width: 125px; overflow: hidden; white-space: nowrap; }
.d-tab.on .d-t { margin-left: 11px; }
.d-x { margin-left: 7px; color: #555; }
.d-dot { width: 20px; height: 20px; border-radius: 50%; background: #616161; margin-left: 4px; }
.d-plus { align-self: center; margin-left: 11px; }
.nb-tools { height: 58px; flex: none; background: #fff; border-bottom: 2px solid #ccc; display: flex; align-items: center; padding-left: 3px; font-size: 23px; }
.t-b { width: 52.400px; display: flex; justify-content: center; }
.t-code { margin-left: 16px; color: #111; font-size: 23.500px; }
.t-chev { margin-left: 66px; }
.t-nb { margin-left: auto; color: #333; }
.t-ext { margin-left: 10px; }
.t-bug { margin-left: 26px; }
.t-kern { margin-left: 26px; color: #333; }
.t-circ { margin-left: 10px; margin-right: 10px; }

.nb-body { flex: 1; background: #fff; position: relative; overflow: hidden; min-height: 0; font-family: "DejaVu Sans Mono", monospace; font-size: 23.400px; }
.cell-top { height: 70px; margin-left: 158px; width: 1795px; background: #f5f5f5; border: 1px solid #e0e0e0; border-top: 0; position: relative; }
.prompt { position: absolute; left: -62px; top: 0; color: #9a9a9a; line-height: 24px; }
.cell-c1 { margin: 0; padding: 0 0 0 9px; line-height: 24px; color: #408080; font-style: italic; font-family: inherit; }
.cell-out { margin: 19px 0 0 158px; width: 1795px; height: 802px; background: #f5f5f5; border: 1px solid #e0e0e0; display: flex; flex-direction: column; overflow: hidden; }
.code-lines { flex: 1; margin: 0; padding: 336px 0 0 983px; line-height: 30.400px; color: #2e8b1e; font-family: inherit; white-space: pre; overflow: hidden; }
.br { color: #99997a; }
.hscroll { height: 32px; flex: none; border-top: 3px solid #e2e2e2; background: #f7f7f7; padding: 3px 0 0 1000px; }
.thumb { display: block; width: 440px; height: 22px; border-radius: 0 11px 11px 0; background: #7f7f7f; }
.output { margin: 10px 0 0 186px; line-height: 30.400px; color: #222; font-family: inherit; white-space: pre; }

.findbar { position: absolute; left: 1251px; right: 0; top: 0; height: 60px; background: #fff; border-left: 1px solid #ddd; border-bottom: 2px solid #ccc; display: flex; align-items: center; padding-bottom: 6px; font-family: Inter, sans-serif; font-size: 23.500px; }
.find-box { margin-left: 32px; width: 367px; height: 38px; border: 1px solid #bbb; display: flex; align-items: center; justify-content: flex-end; gap: 6px; padding-right: 4px; }
.find-t { flex: 1; min-width: 0; text-align: right; overflow: hidden; white-space: nowrap; color: #333; margin-right: 11px; }
.fb { width: 30px; height: 30px; background: #9e9e9e; color: #fff; font-size: 20px; display: flex; align-items: center; justify-content: center; flex: none; }
.fb sup { font-size: 13px; line-height: 1; }
.fb-u { text-decoration: underline; }
.find-f { margin-left: 9px; }
.find-c { margin-left: 23px; color: #333; }
.find-up { margin-left: auto; }
.find-dn { margin-left: 30px; }
.find-x { margin-left: 28px; margin-right: 12px; }

.rail-r { width: 59px; flex: none; background: #eee; display: flex; flex-direction: column; align-items: center; padding-top: 26px; }
.r-bug { margin-top: 64px; }

.status { height: 43px; background: #eee; flex: none; display: flex; align-items: center; font-size: 23.200px; color: #333; border-top: 1px solid #ccc; }
.s-simple { margin-left: 51px; }
.s-toggle { margin-left: 8px; width: 62px; height: 29px; border-radius: 15px; background: #bdbdbd; display: flex; align-items: center; padding-left: 5px; }
.s-toggle i { width: 19px; height: 23px; border-radius: 50%; background: #fff; }
.s-0 { margin-left: 48px; }
.s-term { margin-left: 20px; width: 28px; height: 28px; background: #3c3c3c; color: #fff; font-size: 16px; display: flex; align-items: center; justify-content: center; font-family: "DejaVu Sans Mono", monospace; }
.s-6 { margin-left: 16px; }
.s-cpu { margin-left: 18px; }
.s-kern { margin-left: 34px; }
.s-mode { margin-left: auto; }
.s-shield { margin-left: 34px; }
.s-ln { margin-left: 34px; }
.s-file { margin-left: 31px; }
.s-n { margin-left: 30px; }
.s-bell { margin-left: 19px; margin-right: 34px; }

/* Floating plot window */
.plotwin { position: absolute; left: 708px; top: 422px; width: 1279px; height: 1015px; background: #000; border-radius: 20px; overflow: hidden; box-shadow: 0 20px 50px rgba(0,0,0,.45), 0 0 12px rgba(0,0,0,.25); }
.pw-title { height: 56px; background: #faf2ef; display: flex; align-items: center; justify-content: center; position: relative; font-weight: 600; font-size: 27px; color: #4a4a4a; padding-bottom: 2px; }
.tl { position: absolute; top: 16px; width: 24px; height: 24px; border-radius: 50%; }
.tl.r { left: 16px; background: #ed6a5e; }
.tl.y { left: 56px; background: #f5bf4f; }
.tl.g { left: 96px; background: #61c554; }
.major { stroke: #fff; stroke-opacity: .25; fill: none; stroke-width: 1; }
.major-half { stroke: #fff; stroke-opacity: .15; fill: none; stroke-width: 1; }
.axis { stroke: #aaa; fill: none; stroke-width: 1.500; }
.wall { stroke: #efefef; fill: none; stroke-width: 2; }
.traj { stroke: #3de600; stroke-width: 2.500; }
.dot-g { fill: #3de600; }
.dot-b { fill: #6fa8dc; }
.ticks text { fill: #9c9c9c; font-size: 24px; text-anchor: middle; font-family: Inter, sans-serif; }
.ticks-y text { text-anchor: end; }
.pw-btns { display: flex; gap: 28px; padding-left: 330px; }
.slot { height: 64px; flex: none; background: #ebebeb; padding: 10px 3px 14px; }
.slot button { display: block; width: 100%; height: 40px; border: 0; border-radius: 8px; background: #fff; box-shadow: 0 1px 2px rgba(0,0,0,.4); font-family: Inter, sans-serif; font-size: 25.500px; color: #111; padding: 0; }
.s1 { width: 164px; }
.s2 { width: 134px; }
.s3 { width: 218px; }
.s4 { width: 128px; }
.s5 { width: 112px; }
.s6 { width: 100px; }
```
